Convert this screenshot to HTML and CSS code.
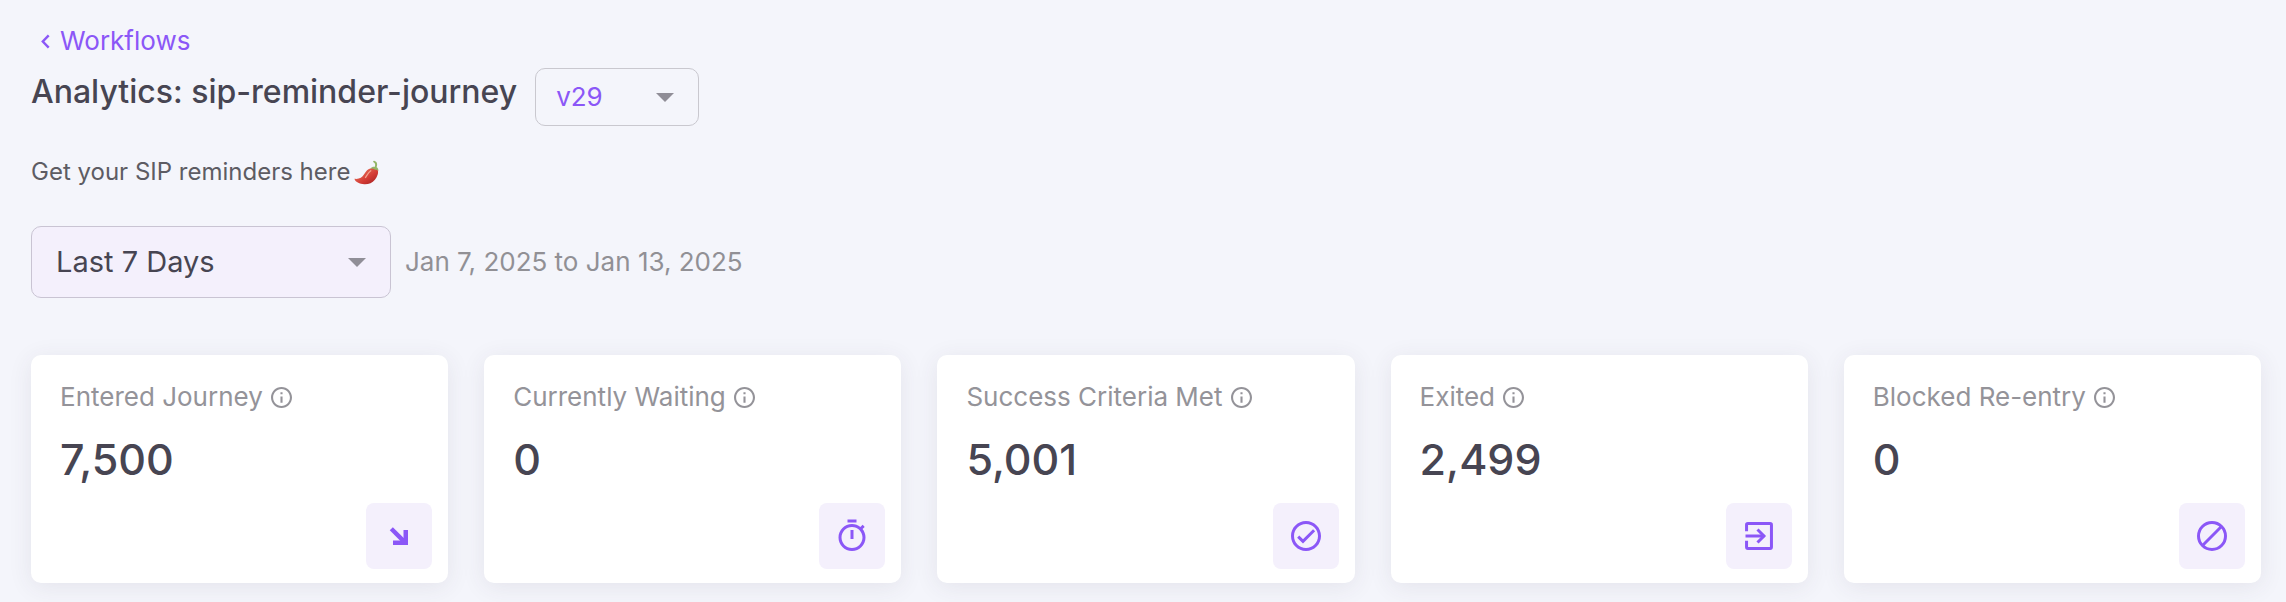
FILE: index.html
```html
<!DOCTYPE html>
<html lang="en">
<head>
<meta charset="utf-8">
<meta name="viewport" content="width=device-width, initial-scale=1">
<title>Analytics: sip-reminder-journey</title>
<link rel="stylesheet" href="styles.css">
</head>
<body>
<main class="page">
  <nav class="breadcrumb">
    <a class="back-link" href="#">
      <svg class="back-icon" viewBox="0 0 9 15" aria-hidden="true"><path d="M7.7 1.3 1.8 7.5l5.9 6.2"/></svg>
      Workflows
    </a>
  </nav>

  <header class="heading">
    <h1 class="title">Analytics: sip-reminder-journey</h1>
    <div class="select select-version">
      <select class="select-input" aria-label="Version">
        <option>v29</option>
      </select>
      <svg class="select-arrow" viewBox="0 0 18 9" aria-hidden="true"><path d="M0 0h18L9 9z"/></svg>
    </div>
  </header>

  <p class="description">Get your SIP reminders here
    <svg class="chili" viewBox="0 0 25 25" role="img" aria-label="Hot pepper">
      <defs>
        <linearGradient id="chili-body" x1="0" y1="0" x2="1" y2="1">
          <stop offset=".3" stop-color="#e0604e"/>
          <stop offset=".6" stop-color="#d33a34"/>
          <stop offset="1" stop-color="#9c1f20"/>
        </linearGradient>
      </defs>
      <path d="M.4 18.8c4.600.6 7.600-1.100 9.700-4.500 1.800-3 3.700-5.600 7.100-6.100 2.600-.4 5.300.2 6.400 1.500 1.300 2.300-.1 7-2.700 10-2.600 3.200-6.500 4.700-10.600 4.500C5.700 24.100 1 21.900.4 18.800z" fill="url(#chili-body)"/>
      <path d="M11.500 17.500c1.600-2.400 2.800-5 5.300-6.700" fill="none" stroke="#f3a08e" stroke-width="1.300" stroke-linecap="round"/>
      <path d="M16.300 8.600c1.300-1.500 3-2 4.400-1.700.9-1.900.6-3.700-1.200-4.600-.7-.5-.3-1.700.7-1.500 2.900.8 3.600 3.400 2.400 6.500 1.300.7 1.900 1.900 1.800 3.700-1.100-1.300-2.100-1.400-3.200-1.200-1.500-.9-3.100-1.400-4.900-1.200z" fill="#93b567"/>
    </svg>
  </p>

  <section class="filters" aria-label="Date range">
    <div class="select select-range">
      <select class="select-input" aria-label="Date range">
        <option>Last 7 Days</option>
      </select>
      <svg class="select-arrow" viewBox="0 0 18 9" aria-hidden="true"><path d="M0 0h18L9 9z"/></svg>
    </div>
    <span class="range-text">Jan 7, 2025 to Jan 13, 2025</span>
  </section>

  <svg class="sprite" aria-hidden="true">
    <symbol id="info" viewBox="2 2 20 20"><path d="M11 7h2v2h-2zm0 4h2v6h-2zm1-9C6.480 2 2 6.480 2 12s4.480 10 10 10 10-4.480 10-10S17.520 2 12 2zm0 18c-4.410 0-8-3.590-8-8s3.590-8 8-8 8 3.590 8 8-3.590 8-8 8z"/></symbol>
  </svg>

  <section class="cards" aria-label="Journey metrics">
    <article class="card">
      <h2 class="card-label">Entered Journey <svg class="info"><use href="#info"/></svg></h2>
      <p class="card-value">7,500</p>
      <div class="badge">
        <svg class="badge-icon" viewBox="0 0 36 36" aria-hidden="true"><path d="M10.300 10.700 22 22.400" fill="none" stroke="currentColor" stroke-width="4.400"/><path d="M22.500 12H27v15H12v-4.500h7.500L22.500 20z"/></svg>
      </div>
    </article>
    <article class="card">
      <h2 class="card-label">Currently Waiting <svg class="info"><use href="#info"/></svg></h2>
      <p class="card-value">0</p>
      <div class="badge">
        <svg class="badge-icon" viewBox="0 0 24 24" aria-hidden="true"><path d="M15 1H9v2h6V1zm-4 13h2V8h-2v6zm8.030-6.610 1.420-1.420c-.43-.51-.9-.99-1.410-1.410l-1.420 1.420C16.070 4.740 14.120 4 12 4c-4.970 0-9 4.030-9 9s4.020 9 9 9 9-4.030 9-9c0-2.120-.74-4.070-1.970-5.610zM12 20c-3.870 0-7-3.130-7-7s3.130-7 7-7 7 3.130 7 7-3.130 7-7 7z"/></svg>
      </div>
    </article>
    <article class="card">
      <h2 class="card-label">Success Criteria Met <svg class="info"><use href="#info"/></svg></h2>
      <p class="card-value">5,001</p>
      <div class="badge">
        <svg class="badge-icon" viewBox="0 0 24 24" aria-hidden="true"><path d="M12 2C6.480 2 2 6.480 2 12s4.480 10 10 10 10-4.480 10-10S17.520 2 12 2zm0 18c-4.410 0-8-3.590-8-8s3.590-8 8-8 8 3.590 8 8-3.590 8-8 8z"/><path d="m6.800 12.400 3.200 3.200 7.400-7.400" fill="none" stroke="currentColor" stroke-width="2"/></svg>
      </div>
    </article>
    <article class="card">
      <h2 class="card-label">Exited <svg class="info"><use href="#info"/></svg></h2>
      <p class="card-value">2,499</p>
      <div class="badge">
        <svg class="badge-icon" viewBox="0 0 24 24" aria-hidden="true"><g fill="none" stroke="currentColor" stroke-width="2"><path d="M3.700 8.900V4.600q0-.9.9-.9h14.800q.9 0 .9.900v14.800q0 .9-.9.900H4.600q-.9 0-.9-.9v-4.300M3 12h12.500"/><path d="m11 7.700 4.300 4.300-4.300 4.300"/></g></svg>
      </div>
    </article>
    <article class="card">
      <h2 class="card-label">Blocked Re-entry <svg class="info"><use href="#info"/></svg></h2>
      <p class="card-value">0</p>
      <div class="badge">
        <svg class="badge-icon" viewBox="0 0 24 24" aria-hidden="true"><g fill="none" stroke="currentColor" stroke-width="2"><circle cx="12" cy="12" r="9"/><path d="M5.700 18.300 18.300 5.700"/></g></svg>
      </div>
    </article>
  </section>
</main>
</body>
</html>
```
FILE: styles.css
```css
* {
  box-sizing: border-box;
}

body {
  margin: 0;
  background: #f4f5fb;
  color: #474552;
  font-family: Inter, "Liberation Sans", sans-serif;
  font-size: 26px;
  line-height: 32px;
}

h1,
h2,
p {
  margin: 0;
  font-weight: 400;
}

.page {
  padding: 25px 25px 19px 31px;
}

.breadcrumb {
  display: flex;
}

.back-link {
  display: flex;
  align-items: center;
  gap: 10px;
  padding-left: 10px;
  color: #8b57f7;
  text-decoration: none;
}

.back-icon {
  width: 9px;
  height: 15px;
  fill: none;
  stroke: currentColor;
  stroke-width: 2.4;
}

.heading {
  display: flex;
  align-items: flex-start;
  gap: 18px;
  margin-top: 11px;
}

.title {
  padding-top: 4px;
  font-size: 32px;
  font-weight: 500;
  line-height: 40px;
}

.select {
  display: grid;
  align-items: center;
}

.select-input,
.select-arrow {
  grid-area: 1 / 1;
}

.select-input {
  width: 100%;
  border: 1px solid #c9c8cf;
  border-radius: 10px;
  background: transparent;
  color: inherit;
  font: inherit;
  appearance: none;
}

.select-arrow {
  justify-self: end;
  width: 18px;
  height: 9px;
  margin-right: 25px;
  fill: #908e97;
  pointer-events: none;
}

.select-version {
  width: 164px;
  color: #8b57f7;
}

.select-version .select-input {
  padding: 12px 20px;
}

.select-range {
  width: 360px;
  font-size: 29px;
}

.select-range .select-input {
  padding: 18px 24px;
  border-color: #c9c4d3;
  background: #f4f0fc;
  line-height: 34px;
}

.description {
  display: flex;
  align-items: center;
  gap: 4px;
  margin-top: 30px;
  color: #5d5c63;
  font-size: 24px;
}

.chili {
  width: 25px;
  height: 25px;
}

.filters {
  display: flex;
  align-items: center;
  gap: 14px;
  margin-top: 38px;
}

.range-text {
  color: #919095;
}

.sprite {
  display: none;
}

.cards {
  display: grid;
  grid-template-columns: repeat(5, 1fr);
  gap: 36px;
  margin-top: 57px;
}

.card {
  display: flex;
  flex-direction: column;
  padding: 26px 16px 14px 29px;
  border-radius: 10px;
  background: #fff;
  box-shadow: 0 4px 24px rgba(70, 60, 80, 0.09);
}

.card-label {
  display: flex;
  align-items: center;
  gap: 8px;
  color: #949399;
  font-size: 26px;
}

.info {
  width: 21px;
  height: 21px;
  fill: currentColor;
}

.card-value {
  margin-top: 20px;
  font-size: 43px;
  font-weight: 500;
  line-height: 52px;
}

.badge {
  display: grid;
  place-items: center;
  align-self: flex-end;
  width: 66px;
  height: 66px;
  margin-top: 18px;
  border-radius: 8px;
  background: #f4f0fc;
  color: #8b57f7;
}

.badge-icon {
  width: 36px;
  height: 36px;
  fill: currentColor;
}
```
